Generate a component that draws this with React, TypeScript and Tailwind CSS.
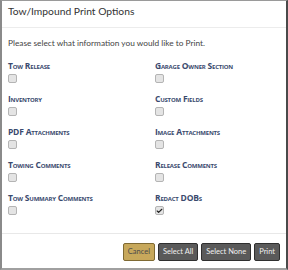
import { Check } from 'lucide-react';

const options: [string, boolean][] = [
  ['Tow Release', false],
  ['Garage Owner Section', false],
  ['Inventory', false],
  ['Custom Fields', false],
  ['PDF Attachments', false],
  ['Image Attachments', false],
  ['Towing Comments', false],
  ['Release Comments', false],
  ['Tow Summary Comments', false],
  ['Redact DOBs', true],
];

function Box({ checked }: { checked: boolean }) {
  return (
    <div className="flex h-[9px] w-[9px] items-center justify-center rounded-[2px] border border-[#b4b4b4] bg-[#e4e4e4]">
      {checked && <Check size={8} strokeWidth={4} className="text-[#222]" />}
    </div>
  );
}

const btn = 'h-[18px] rounded-[2px] border px-[4px] text-[7.5px] font-[Lato,sans-serif]';

export default function App() {
  return (
    <div className="flex h-[270px] w-[288px] flex-col border-l-2 border-t border-b-2 border-r-2 border-l-[#8a8a8a] border-t-[#9a9a9a] border-b-[#a0a0a0] border-r-[#4a4a4a] bg-white font-['Open_Sans',sans-serif]">
      <div className="h-[27px] shrink-0 border-b border-[#ececec] px-[6px] font-[Lato,sans-serif] text-[10.3px] leading-[21px] text-[#333]">
        Tow/Impound Print Options
      </div>

      <div className="px-[6px]">
        <p className="mt-[8px] font-[Lato,sans-serif] text-[8.3px] leading-[14px] text-[#444]">
          Please select what information you would like to Print.
        </p>

        <div className="mt-[10px] grid grid-cols-[147px_1fr]">
          {options.map(([label, checked]) => (
            <div key={label} className="h-[33px]">
              <p className="h-[14px] text-[8.5px] font-bold leading-[12px] tracking-tight text-[#3a4a6e] [font-variant:small-caps]">
                {label}
              </p>
              <Box checked={checked} />
            </div>
          ))}
        </div>
      </div>

      <div className="mt-auto flex h-[35px] items-start justify-end gap-[3px] border-t border-[#e8e8e8] pr-[6px] pt-[9px]">
        <button className={`${btn} border-[#7f6a33] bg-[#c7a85b] text-[#4a4a4a]`}>Cancel</button>
        <button className={`${btn} border-[#2f2f2f] bg-[#5a5a5a] text-[#f0f0f0]`}>Select All</button>
        <button className={`${btn} border-[#2f2f2f] bg-[#5a5a5a] text-[#f0f0f0]`}>Select None</button>
        <button className={`${btn} border-[#2f2f2f] bg-[#5a5a5a] text-[#f0f0f0]`}>Print</button>
      </div>
    </div>
  );
}
